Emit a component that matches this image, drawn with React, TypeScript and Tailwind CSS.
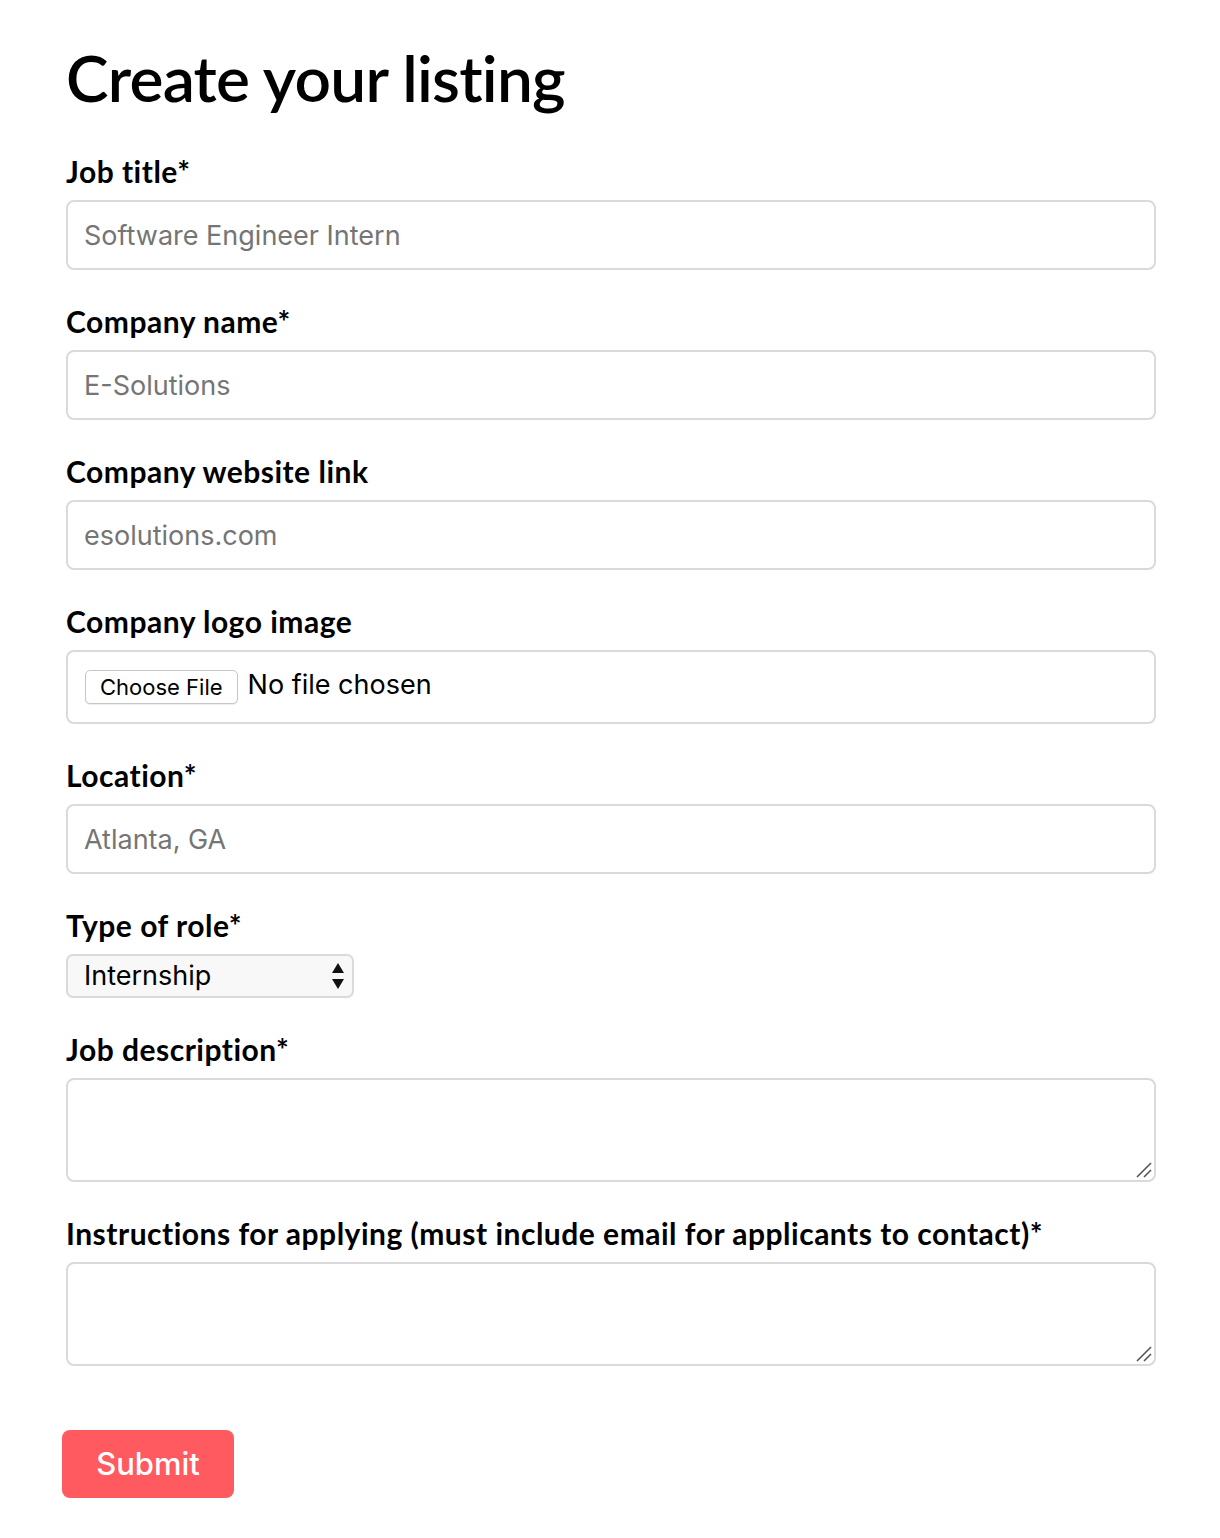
import React from "react";

const labelCls =
  "block font-['Lato',sans-serif] text-[30px] leading-[36px] font-bold tracking-[0.5px] text-black mb-[11px]";
const inputCls =
  "block w-full h-[70px] rounded-[8px] border-2 border-[#dadada] px-[16px] font-['Inter',sans-serif] text-[27px] text-black placeholder:text-[#757575] outline-none bg-white";
const areaCls =
  "block w-full h-[104px] resize-none rounded-[8px] border-2 border-[#dadada] px-[16px] py-[10px] font-['Inter',sans-serif] text-[27px] outline-none bg-white";

function Field({ label, children, last = false }: { label: string; children: React.ReactNode; last?: boolean }) {
  return (
    <div className={last ? "mb-[65px]" : "mb-[33px]"}>
      <label className={labelCls}>{label}</label>
      {children}
    </div>
  );
}

function Grip() {
  return (
    <svg className="absolute right-[3px] bottom-[3px] pointer-events-none" width="18" height="18" viewBox="0 0 18 18">
      <line x1="2" y1="16" x2="16" y2="2" stroke="#555" strokeWidth="1.6" />
      <line x1="9" y1="16" x2="16" y2="9" stroke="#555" strokeWidth="1.6" />
    </svg>
  );
}

export default function App() {
  return (
    <div className="min-h-[1538px] bg-white pl-[66px] pr-[64px] pt-[38px]">
      <h1 className="font-['Lato',sans-serif] text-[64px] leading-[80px] font-semibold tracking-[-0.75px] text-black mb-[35px]">
        Create your listing
      </h1>
      <form>
        <Field label="Job title*">
          <input className={inputCls} placeholder="Software Engineer Intern" />
        </Field>
        <Field label="Company name*">
          <input className={inputCls} placeholder="E-Solutions" />
        </Field>
        <Field label="Company website link">
          <input className={inputCls} placeholder="esolutions.com" />
        </Field>
        <Field label="Company logo image">
          <div className="flex items-center w-full h-[74px] rounded-[8px] border-2 border-[#dadada] pl-[17px] bg-white font-['Inter',sans-serif]">
            <span className="inline-flex items-center h-[34px] px-[14px] rounded-[5px] border border-[#c6c6c6] bg-white text-[22px] text-black shadow-[0_1px_1px_rgba(0,0,0,0.08)]">
              Choose File
            </span>
            <span className="ml-[10px] text-[27px] text-black -mt-[4px]">No file chosen</span>
          </div>
        </Field>
        <Field label="Location*">
          <input className={inputCls} placeholder="Atlanta, GA" />
        </Field>
        <Field label="Type of role*">
          <div className="relative w-[288px] h-[44px]">
            <select
              className="appearance-none w-full h-full rounded-[7px] border-2 border-[#dadada] bg-[#f8f8f8] pl-[16px] font-['Inter',sans-serif] text-[27px] text-black outline-none"
              defaultValue="Internship"
            >
              <option>Internship</option>
              <option>Full-time</option>
              <option>Part-time</option>
            </select>
            <svg className="absolute right-[9px] top-[8px] pointer-events-none" width="14" height="28" viewBox="0 0 14 28">
              <polygon points="7,1 13,11 1,11" fill="#111" />
              <polygon points="1,17 13,17 7,27" fill="#111" />
            </svg>
          </div>
        </Field>
        <Field label="Job description*">
          <div className="relative">
            <textarea className={areaCls} />
            <Grip />
          </div>
        </Field>
        <Field label="Instructions for applying (must include email for applicants to contact)*" last>
          <div className="relative">
            <textarea className={areaCls} />
            <Grip />
          </div>
        </Field>
        <button
          type="button"
          className="-ml-[4px] -mt-[1px] w-[172px] h-[68px] rounded-[8px] bg-[#ff5a5f] text-white font-['Inter',sans-serif] text-[31px] font-medium"
        >
          Submit
        </button>
      </form>
    </div>
  );
}
